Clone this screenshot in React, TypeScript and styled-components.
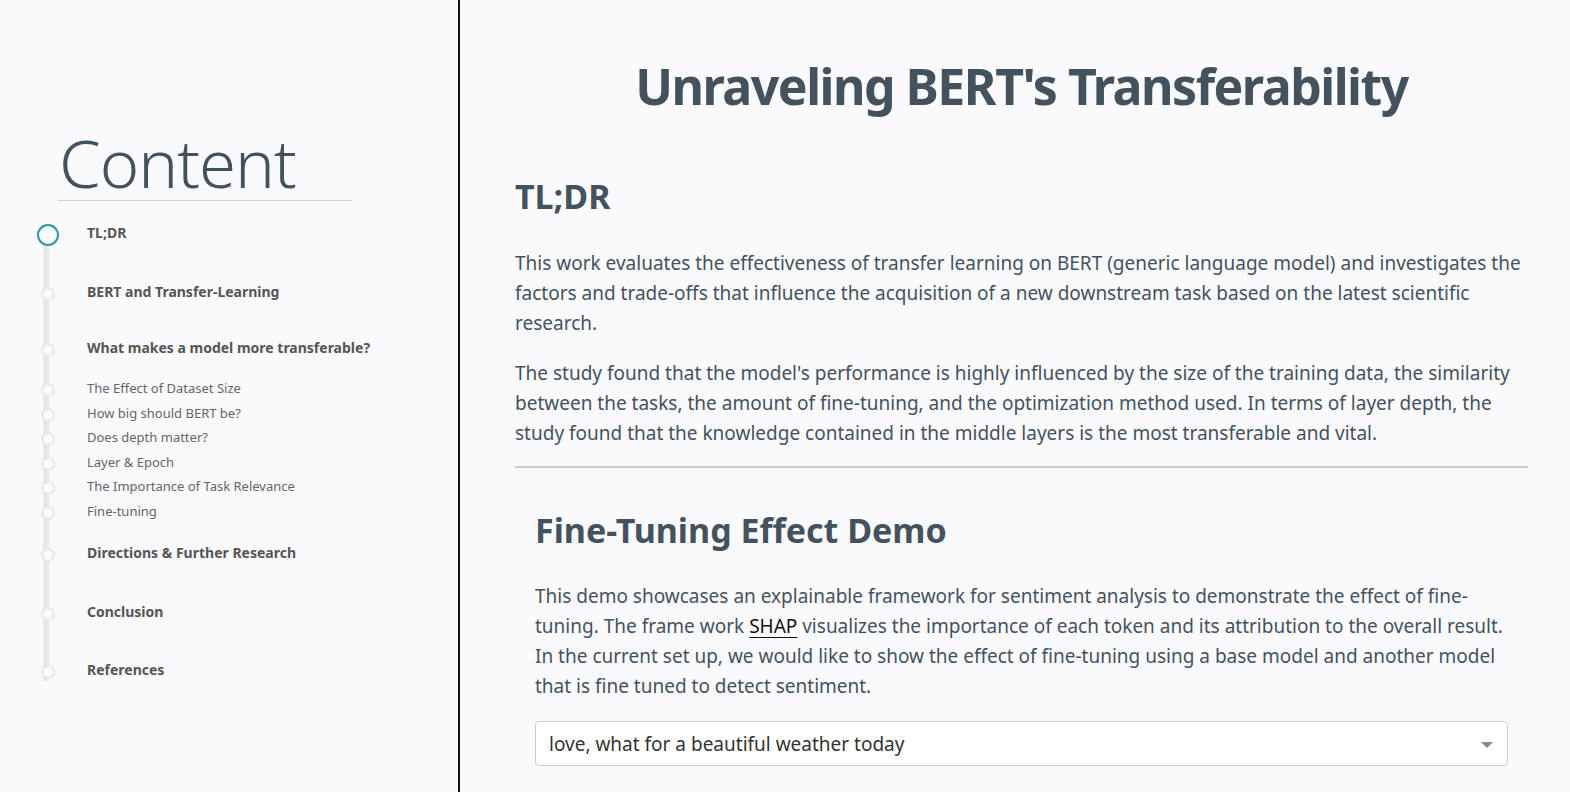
import React from "react";
import styled, { createGlobalStyle } from "styled-components";

const Global = createGlobalStyle`
  html, body { margin: 0; padding: 0; background: #fafafc; }
  body { font-family: "Noto Sans", "Open Sans", sans-serif; color: #44525e; }
  * { box-sizing: border-box; }
`;

const Page = styled.div`
  display: flex;
  height: 792px;
  overflow: hidden;
`;

const Sidebar = styled.aside`
  width: 460px;
  flex: none;
  border-right: 2px solid #111;
  padding: 124px 0 0 0;
`;

const SideTitle = styled.h1`
  margin: 0 106px 0 58px;
  font-weight: 300;
  font-size: 67px;
  letter-spacing: -1px;
  line-height: 76px;
  color: #44525e;
  padding-left: 1px;
  border-bottom: 1px solid #cfd3d9;
`;

const Timeline = styled.ul`
  list-style: none;
  margin: 21px 0 0 0;
  padding: 0;
  position: relative;
  &::before {
    content: "";
    position: absolute;
    left: 43px;
    top: 20px;
    bottom: 8px;
    width: 6px;
    background: #e8e8e8;
  }
`;

const Item = styled.li<{ $major?: boolean; $space: number; $active?: boolean }>`
  position: relative;
  height: ${(p) => p.$space}px;
  display: flex;
  align-items: flex-start;
  padding-left: 87px;
  font-size: ${(p) => (p.$major ? "14px" : "13px")};
  font-weight: ${(p) => (p.$major ? 700 : 400)};
  color: ${(p) => (p.$major ? "#555" : "#666")};
  line-height: 22px;
  &::before {
    content: "";
    position: absolute;
    left: ${(p) => (p.$active ? "37px" : "41px")};
    top: ${(p) => (p.$active ? "2px" : "6px")};
    width: ${(p) => (p.$active ? "18px" : "10px")};
    height: ${(p) => (p.$active ? "18px" : "10px")};
    border-radius: 50%;
    background: #fafafc;
    border: 2px solid ${(p) => (p.$active ? "#2a9a9c" : "#e8e8e8")};
  }
`;

const Main = styled.main`
  flex: 1;
  padding: 50px 42px 0 55px;
`;

const Title = styled.h1`
  margin: 0;
  text-align: center;
  font-size: 50px;
  letter-spacing: -1.5px;
  line-height: 72px;
  font-weight: 700;
  color: #44525e;
`;

const H2 = styled.h2`
  margin: 52px 0 30px;
  font-size: 34px;
  line-height: 44px;
  font-weight: 700;
  color: #44525e;
`;

const P = styled.p`
  margin: 0 0 20px;
  font-size: 19px;
  line-height: 30px;
  color: #44525e;
`;

const Rule = styled.hr`
  border: none;
  height: 2px;
  background: #c9cbcf;
  margin: -2px 0 0;
`;

const Demo = styled.section`
  padding: 0 20px;
`;

const DemoTitle = styled(H2)`
  margin: 40px 0 29px;
`;

const Link = styled.a`
  color: #111;
  text-decoration: underline;
  text-underline-offset: 4px;
`;

const Select = styled.div`
  position: relative;
  height: 45px;
  border: 1px solid #ccc;
  border-radius: 4px;
  background: #fff;
  display: flex;
  align-items: center;
  padding: 0 13px;
  font-size: 19px;
  color: #333;
  margin-top: 1px;
`;

const Arrow = styled.span`
  position: absolute;
  right: 14px;
  top: 20px;
  width: 0;
  height: 0;
  border-left: 6px solid transparent;
  border-right: 6px solid transparent;
  border-top: 6px solid #888;
`;

const items: { t: string; major?: boolean; space: number; active?: boolean }[] = [
  { t: "TL;DR", major: true, space: 59, active: true },
  { t: "BERT and Transfer-Learning", major: true, space: 56 },
  { t: "What makes a model more transferable?", major: true, space: 40 },
  { t: "The Effect of Dataset Size", space: 24.5 },
  { t: "How big should BERT be?", space: 24.5 },
  { t: "Does depth matter?", space: 24.5 },
  { t: "Layer & Epoch", space: 24.5 },
  { t: "The Importance of Task Relevance", space: 24.5 },
  { t: "Fine-tuning", space: 42 },
  { t: "Directions & Further Research", major: true, space: 59 },
  { t: "Conclusion", major: true, space: 58 },
  { t: "References", major: true, space: 30 },
];

export default function App() {
  return (
    <Page>
      <Global />
      <Sidebar>
        <SideTitle>Content</SideTitle>
        <Timeline>
          {items.map((i) => (
            <Item key={i.t} $major={i.major} $space={i.space} $active={i.active}>
              {i.t}
            </Item>
          ))}
        </Timeline>
      </Sidebar>
      <Main>
        <Title>Unraveling BERT's Transferability</Title>
        <H2>TL;DR</H2>
        <P>
          This work evaluates the effectiveness of transfer learning on BERT (generic language model) and
          investigates the factors and trade-offs that influence the acquisition of a new downstream task based on
          the latest scientific research.
        </P>
        <P>
          The study found that the model's performance is highly influenced by the size of the training data, the
          similarity between the tasks, the amount of fine-tuning, and the optimization method used. In terms of
          layer depth, the study found that the knowledge contained in the middle layers is the most transferable
          and vital.
        </P>
        <Rule />
        <Demo>
          <DemoTitle>Fine-Tuning Effect Demo</DemoTitle>
          <P>
            This demo showcases an explainable framework for sentiment analysis to demonstrate the effect of
            fine-tuning. The frame work <Link href="#">SHAP</Link> visualizes the importance of each token and its
            attribution to the overall result. In the current set up, we would like to show the effect of
            fine-tuning using a base model and another model that is fine tuned to detect sentiment.
          </P>
          <Select>
            love, what for a beautiful weather today
            <Arrow />
          </Select>
        </Demo>
      </Main>
    </Page>
  );
}
